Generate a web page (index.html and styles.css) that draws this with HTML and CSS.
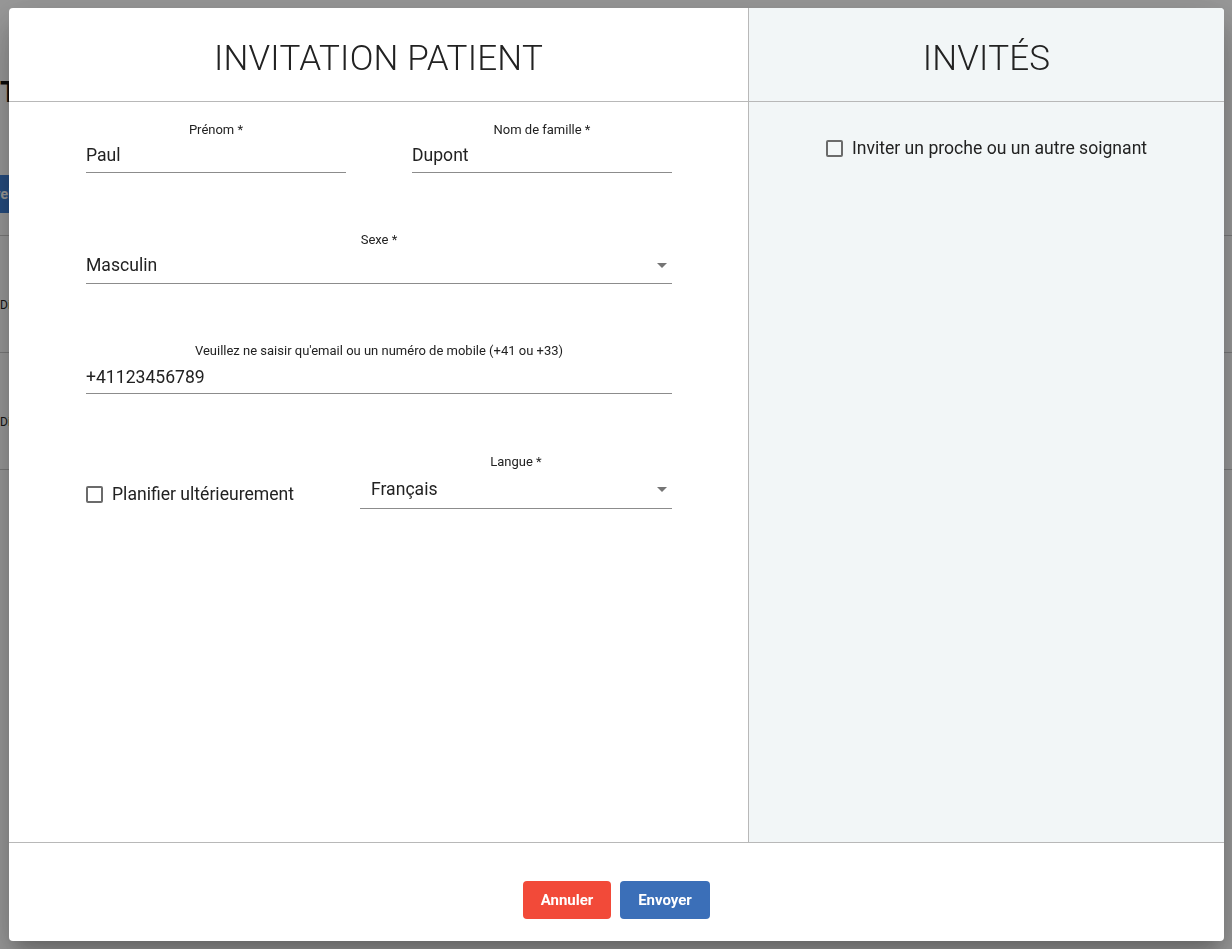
FILE: index.html
```html
<!DOCTYPE html>
<html lang="fr">
<head>
<meta charset="utf-8">
<title>Invitation patient</title>
<link rel="stylesheet" href="styles.css">
</head>
<body>
<div class="page">
  <h1 class="page-title">Téléconsultations</h1>
  <button class="page-btn">Nouvelle consultation</button>
  <div class="page-list">
    <div class="page-row">Diagnostic</div>
    <div class="page-row">Diagnostic</div>
  </div>
</div>
<div class="backdrop"></div>
<div class="modal">
  <div class="cols">
    <section class="col col-main">
      <header class="col-head"><h2 class="title">INVITATION PATIENT</h2></header>
      <div class="col-body form">
        <div class="row row-two">
          <div class="field">
            <div class="label">Prénom *</div>
            <div class="value">Paul</div>
          </div>
          <div class="field">
            <div class="label">Nom de famille *</div>
            <div class="value">Dupont</div>
          </div>
        </div>
        <div class="row">
          <div class="field field-select">
            <div class="label">Sexe *</div>
            <div class="value">Masculin<span class="caret"></span></div>
          </div>
        </div>
        <div class="row">
          <div class="field field-phone">
            <div class="label">Veuillez ne saisir qu'email ou un numéro de mobile (+41 ou +33)</div>
            <div class="value">+41123456789</div>
          </div>
        </div>
        <div class="row row-last">
          <label class="check check-schedule"><span class="box"></span><span>Planifier ultérieurement</span></label>
          <div class="field field-select field-lang">
            <div class="label">Langue *</div>
            <div class="value">Français<span class="caret"></span></div>
          </div>
        </div>
      </div>
    </section>
    <section class="col col-side">
      <header class="col-head"><h2 class="title">INVITÉS</h2></header>
      <div class="col-body side-body">
        <label class="check"><span class="box"></span><span>Inviter un proche ou un autre soignant</span></label>
      </div>
    </section>
  </div>
  <footer class="footer">
    <button class="btn btn-cancel">Annuler</button>
    <button class="btn btn-send">Envoyer</button>
  </footer>
</div>
</body>
</html>
```
FILE: styles.css
```css
* { box-sizing: border-box; }
html, body { margin: 0; height: 100%; }
body {
  font-family: Roboto, "Liberation Sans", sans-serif;
  background: #fff;
  color: #222;
  overflow: hidden;
}

/* underlying page */
.page { padding-top: 78px; }
.page-title {
  margin: 0;
  font-size: 30px;
  font-weight: 700;
  line-height: 28px;
  color: #111;
}
.page-btn {
  display: block;
  margin: 69px 0 0 -44px;
  height: 38px;
  padding: 0 12px;
  border: 0;
  border-radius: 4px;
  background: #3f7fd4;
  color: #fff;
  font: 700 14px Roboto, sans-serif;
}
.page-list { margin-top: 22px; border-top: 1px solid #ccc; }
.page-row {
  height: 117px;
  border-bottom: 1px solid #ccc;
  padding-top: 61px;
  font-size: 12px;
  line-height: 16px;
  color: #222;
}

.backdrop {
  position: fixed;
  inset: 0;
  background: rgba(0, 0, 0, 0.4);
}

/* modal */
.modal {
  position: fixed;
  left: 9px;
  top: 8px;
  width: 1215px;
  height: 933px;
  background: #fff;
  border-radius: 4px;
  display: flex;
  flex-direction: column;
  overflow: hidden;
  box-shadow: 0 11px 15px -7px rgba(0,0,0,.2), 0 24px 38px 3px rgba(0,0,0,.14), 0 9px 46px 8px rgba(0,0,0,.12);
}
.cols {
  height: 835px;
  display: grid;
  grid-template-columns: 740px 1fr;
  border-bottom: 1px solid #b8b8b8;
}
.col { display: flex; flex-direction: column; }
.col-main { border-right: 1px solid #b8b8b8; }
.col-side { background: #f2f6f7; }
.col-head {
  height: 94px;
  border-bottom: 1px solid #b8b8b8;
  display: flex;
  align-items: center;
  justify-content: center;
  padding-top: 8px;
}
.title {
  margin: 0;
  font-size: 35px;
  font-weight: 300;
  line-height: 40px;
  color: #222;
  letter-spacing: 0.2px;
}

/* form */
.form {
  padding: 20px 76px 0 77px;
  display: flex;
  flex-direction: column;
  gap: 59px;
}
.row-two {
  display: grid;
  grid-template-columns: 260px 260px;
  column-gap: 66px;
}
.field { width: 100%; }
.label {
  font-size: 13px;
  line-height: 16px;
  text-align: center;
  color: #222;
}
.value {
  margin-top: 5px;
  padding-bottom: 5px;
  font-size: 17.6px;
  line-height: 24px;
  color: #222;
  border-bottom: 1px solid #8c8c8c;
  position: relative;
}
.field-select .value { margin-top: 5px; padding-bottom: 6px; }
.field-phone .value { margin-top: 6px; padding-bottom: 4px; }
.field-lang .value { margin-top: 7px; padding-bottom: 7px; padding-left: 11px; }
.caret {
  position: absolute;
  right: 5px;
  top: 10px;
  width: 0;
  height: 0;
  border-left: 5px solid transparent;
  border-right: 5px solid transparent;
  border-top: 5px solid #757575;
}
.row-last {
  display: flex;
  align-items: flex-end;
  margin-top: 1px;
}
.field-lang { flex: 1; }

.check {
  display: flex;
  align-items: center;
  gap: 9px;
  font-size: 17.6px;
  line-height: 24px;
  color: #222;
}
.check-schedule { width: 274px; flex: none; margin-bottom: 3px; }
.box {
  width: 17px;
  height: 17px;
  border: 2px solid #6b6b6b;
  border-radius: 2px;
  flex: none;
}
.side-body {
  padding-top: 34px;
  display: flex;
  justify-content: center;
}

/* footer */
.footer {
  flex: 1;
  display: flex;
  justify-content: center;
  align-items: flex-start;
  gap: 9px;
  padding-top: 38px;
}
.btn {
  height: 38px;
  border: 0;
  border-radius: 4px;
  color: #fff;
  font: 700 15px Roboto, "Liberation Sans", sans-serif;
  padding: 0;
}
.btn-cancel { width: 88px; background: #f24a39; }
.btn-send { width: 90px; background: #3b6fb8; }
```
